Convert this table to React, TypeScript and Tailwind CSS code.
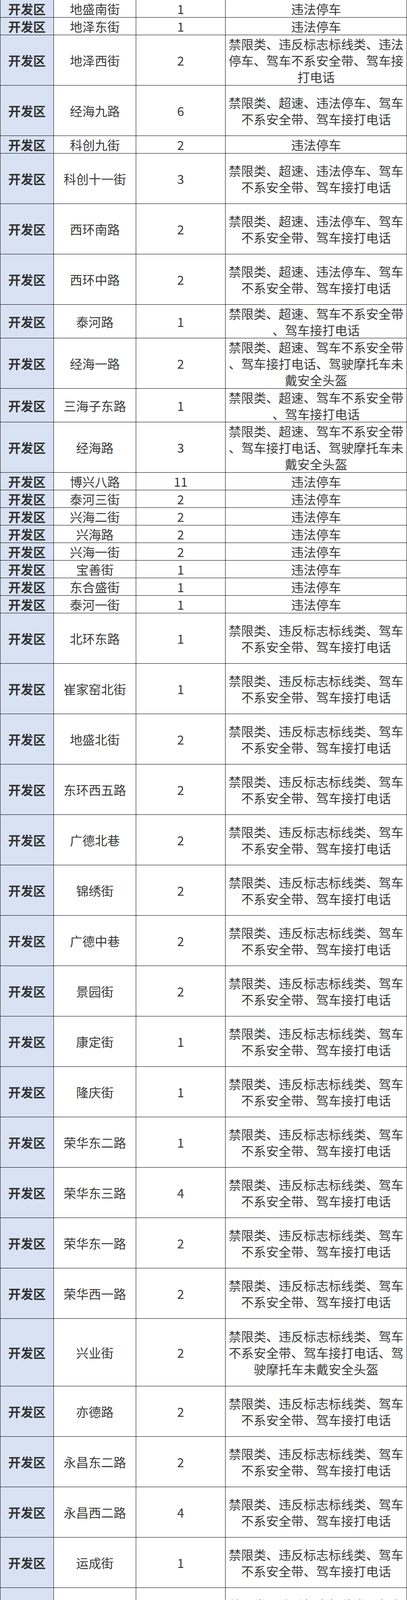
import React from "react";

type Row = { road: string; count: string; lines: string[]; h: number };

const A = ["禁限类、超速、违法停车、驾车", "不系安全带、驾车接打电话"];
const B = ["禁限类、违反标志标线类、驾车", "不系安全带、驾车接打电话"];
const C = ["禁限类、超速、驾车不系安全带", "、驾车接打电话"];
const D = ["禁限类、超速、驾车不系安全带", "、驾车接打电话、驾驶摩托车未", "戴安全头盔"];
const P = ["违法停车"];

const rows: Row[] = [
  { road: "地盛南街", count: "1", lines: P, h: 45 },
  { road: "地泽东街", count: "1", lines: P, h: 45 },
  {
    road: "地泽西街",
    count: "2",
    lines: ["禁限类、违反标志标线类、违法", "停车、驾车不系安全带、驾车接", "打电话"],
    h: 129,
  },
  { road: "经海九路", count: "6", lines: A, h: 129 },
  { road: "科创九街", count: "2", lines: P, h: 45 },
  { road: "科创十一街", count: "3", lines: A, h: 129 },
  { road: "西环南路", count: "2", lines: A, h: 129 },
  { road: "西环中路", count: "2", lines: A, h: 129 },
  { road: "泰河路", count: "1", lines: C, h: 86 },
  { road: "经海一路", count: "2", lines: D, h: 129 },
  { road: "三海子东路", count: "1", lines: C, h: 86 },
  { road: "经海路", count: "3", lines: D, h: 129 },
  { road: "博兴八路", count: "11", lines: P, h: 45 },
  { road: "泰河三街", count: "2", lines: P, h: 45 },
  { road: "兴海二街", count: "2", lines: P, h: 45 },
  { road: "兴海路", count: "2", lines: P, h: 45 },
  { road: "兴海一街", count: "2", lines: P, h: 45 },
  { road: "宝善街", count: "1", lines: P, h: 45 },
  { road: "东合盛街", count: "1", lines: P, h: 45 },
  { road: "泰河一街", count: "1", lines: P, h: 45 },
  { road: "北环东路", count: "1", lines: B, h: 129 },
  { road: "崔家窑北街", count: "1", lines: B, h: 129 },
  { road: "地盛北街", count: "2", lines: B, h: 129 },
  { road: "东环西五路", count: "2", lines: B, h: 129 },
  { road: "广德北巷", count: "2", lines: B, h: 129 },
  { road: "锦绣街", count: "2", lines: B, h: 129 },
  { road: "广德中巷", count: "2", lines: B, h: 129 },
  { road: "景园街", count: "2", lines: B, h: 129 },
  { road: "康定街", count: "1", lines: B, h: 129 },
  { road: "隆庆街", count: "1", lines: B, h: 129 },
  { road: "荣华东二路", count: "1", lines: B, h: 129 },
  { road: "荣华东三路", count: "4", lines: B, h: 129 },
  { road: "荣华东一路", count: "2", lines: B, h: 129 },
  { road: "荣华西一路", count: "2", lines: B, h: 129 },
  {
    road: "兴业街",
    count: "2",
    lines: ["禁限类、违反标志标线类、驾车", "不系安全带、驾车接打电话、驾", "驶摩托车未戴安全头盔"],
    h: 173,
  },
  { road: "亦德路", count: "2", lines: B, h: 129 },
  { road: "永昌东二路", count: "2", lines: B, h: 129 },
  { road: "永昌西二路", count: "4", lines: B, h: 129 },
  { road: "运成街", count: "1", lines: B, h: 129 },
  { road: "东环西四路", count: "1", lines: B, h: 129 },
  { road: "建安北小街", count: "1", lines: B, h: 129 },
  { road: "建安街", count: "2", lines: B, h: 129 },
  { road: "同济南路", count: "1", lines: B, h: 129 },
  { road: "文昌大道", count: "1", lines: B, h: 129 },
  { road: "永昌南路", count: "1", lines: B, h: 129 },
  { road: "荣华北路", count: "2", lines: B, h: 129 },
  { road: "万源街", count: "1", lines: B, h: 129 },
];

const cell = "flex items-center justify-center border-r border-black";

export default function App() {
  return (
    <div
      className="w-[1043px] bg-white text-[32px] leading-[42px] text-[#3a3a3a]"
      style={{ fontFamily: '"Noto Sans CJK SC", "Noto Sans", sans-serif' }}
    >
      <div className="border-l border-black">
        {rows.map((r, i) => (
          <div
            key={i}
            className="grid grid-cols-[137px_211px_229px_1fr] border-b border-black"
            style={{ height: r.h }}
          >
            <div className={`${cell} bg-[#d9e2f3] font-bold text-[#333]`}>开发区</div>
            <div className={cell}>{r.road}</div>
            <div className={cell}>{r.count}</div>
            <div className={`${cell} flex-col text-center`}>
              {r.lines.map((l, j) => (
                <div key={j} className="whitespace-nowrap">
                  {l}
                </div>
              ))}
            </div>
          </div>
        ))}
      </div>
    </div>
  );
}
